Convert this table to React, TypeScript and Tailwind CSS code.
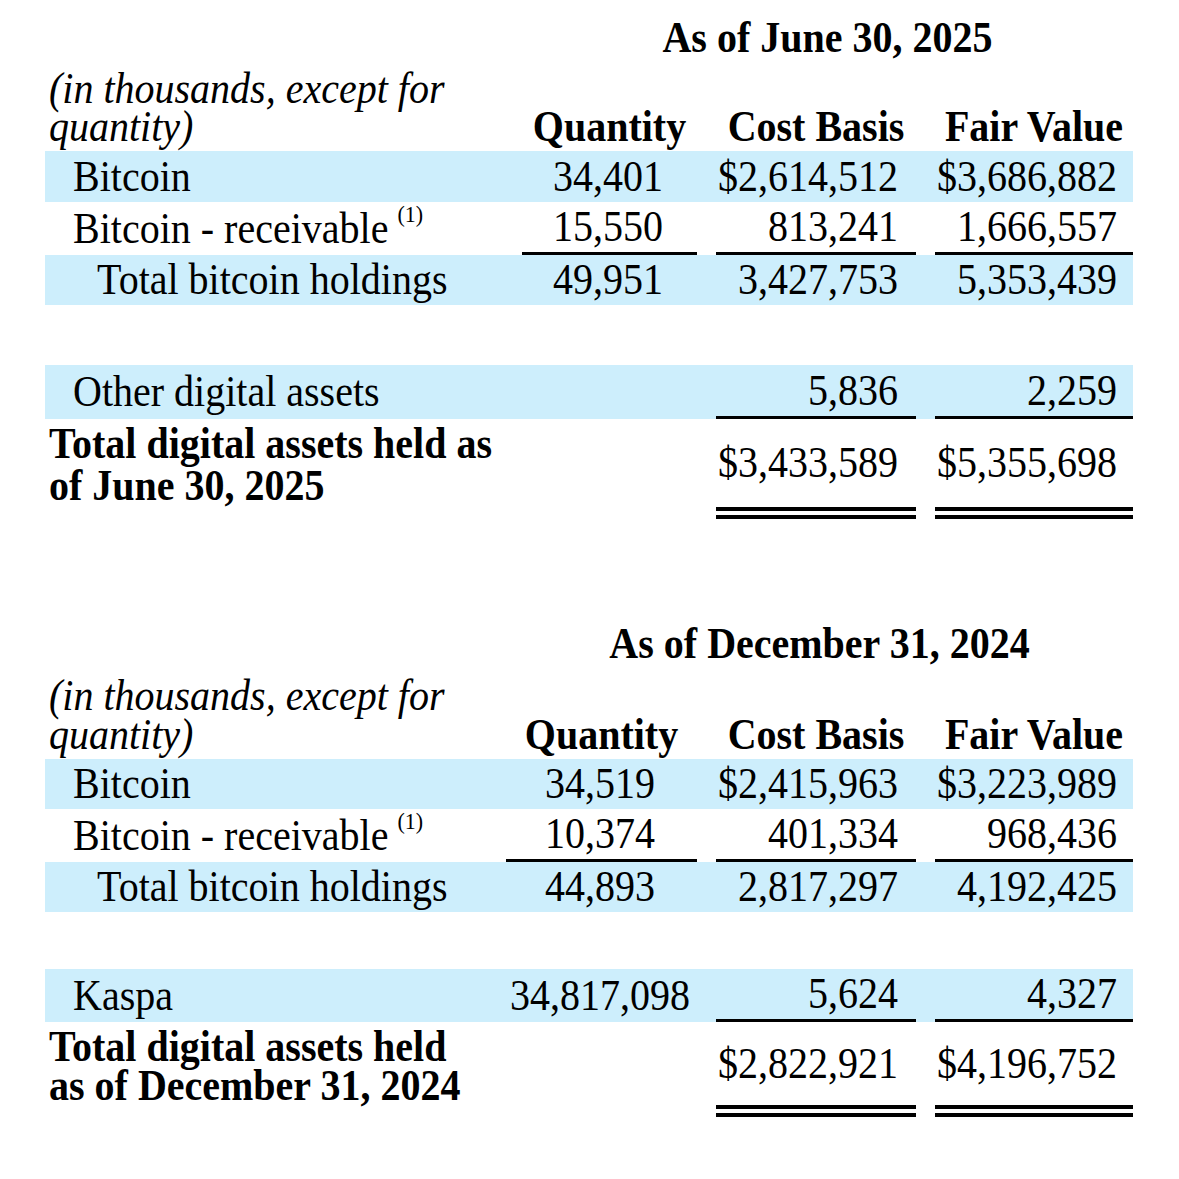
import type { ReactNode } from 'react';

const band = 'bg-[#cdeefc]';
const serif = "font-['Liberation_Serif','Times_New_Roman',serif]";

// the source text is a little taller than Liberation Serif, so stretch glyphs vertically
function T({ children, className = '' }: { children: ReactNode; className?: string }) {
  return <span className={`inline-block scale-y-[1.09] ${className}`}>{children}</span>;
}

type Line = {
  label: ReactNode;
  indent: 'one' | 'two';
  qty?: string;
  cost: string;
  fair: string;
  shaded?: boolean;
  rule?: boolean; // single rule under the figures
  ruleQty?: boolean;
  height: string;
  qtyPad?: string;
};

type TableProps = {
  cols: string;
  qtyPad: string;
  heading: string;
  headBlock: string; // leading for the italic note
  rows: Line[];
  gapAfter: string;
  extra: Line;
  totalLines: [string, string];
  totalLead: string;
  totalCost: string;
  totalFair: string;
  totalPad: string;
  totalHeight: string;
};

function Receivable() {
  return (
    <>
      Bitcoin - receivable
      <sup className="relative -top-[19px] ml-[9px] text-[22px] align-baseline">(1)</sup>
    </>
  );
}

function Row({ line, cols, qtyPad }: { line: Line; cols: string; qtyPad: string }) {
  const rule = line.rule ? 'border-b-[3px] border-black' : '';
  return (
    <div className={`grid ${cols} gap-x-[19px] ${line.shaded ? band : ''}`}>
      <div className={`flex items-center ${line.height} ${line.indent === 'two' ? 'pl-[52px]' : 'pl-[28px]'}`}>
        <T>{line.label}</T>
      </div>
      <div
        className={`flex items-center justify-end ${line.height} ${line.qtyPad ?? qtyPad} ${line.ruleQty ? rule : ''}`}
      >
        {line.qty && <T>{line.qty}</T>}
      </div>
      <div className={`flex items-center justify-end pr-[18px] ${line.height} ${rule}`}>
        <T>{line.cost}</T>
      </div>
      <div className={`flex items-center justify-end pr-[16px] ${line.height} ${rule}`}>
        <T>{line.fair}</T>
      </div>
    </div>
  );
}

function HoldingsTable(p: TableProps) {
  return (
    <div className="w-[1088px]">
      {/* heading over the three figure columns */}
      <div className={`grid ${p.cols} gap-x-[19px]`}>
        <div />
        <div className="col-span-3 text-center font-bold leading-[40px]">
          <T>{p.heading}</T>
        </div>
      </div>

      {/* note + column titles */}
      <div className={`grid ${p.cols} gap-x-[19px] items-end mt-[12px]`}>
        <div className={`pl-[4px] italic ${p.headBlock}`}>
          <T className="block">(in thousands, except for</T>
          <T className="block">quantity)</T>
        </div>
        <div className={`text-center font-bold ${p.headBlock}`}>
          <T>Quantity</T>
        </div>
        <div className={`text-center font-bold ${p.headBlock}`}>
          <T>Cost Basis</T>
        </div>
        <div className={`text-center font-bold ${p.headBlock}`}>
          <T>Fair Value</T>
        </div>
      </div>

      <div className="mt-[5px]">
        {p.rows.map((r, i) => (
          <Row key={i} line={r} cols={p.cols} qtyPad={p.qtyPad} />
        ))}
      </div>

      <div className={p.gapAfter}>
        <Row line={p.extra} cols={p.cols} qtyPad={p.qtyPad} />
      </div>

      {/* grand total with double rule */}
      <div className={`grid ${p.cols} gap-x-[19px] items-start`}>
        <div className={`pl-[4px] font-bold ${p.totalLead} ${p.totalPad}`}>
          <T className="block">{p.totalLines[0]}</T>
          <T className="block">{p.totalLines[1]}</T>
        </div>
        <div />
        <div
          className={`flex items-center justify-end pr-[18px] ${p.totalHeight} border-b-[12px] border-double border-black`}
        >
          <T>{p.totalCost}</T>
        </div>
        <div
          className={`flex items-center justify-end pr-[16px] ${p.totalHeight} border-b-[12px] border-double border-black`}
        >
          <T>{p.totalFair}</T>
        </div>
      </div>
    </div>
  );
}

export default function App() {
  return (
    <div className={`w-[1179px] h-[1179px] bg-white text-black ${serif} text-[40px] leading-[40px] pl-[45px] pt-[18px]`}>
      <HoldingsTable
        cols="grid-cols-[458px_175px_200px_198px]"
        qtyPad="pr-[34px]"
        heading="As of June 30, 2025"
        headBlock="leading-[38px]"
        rows={[
          { label: 'Bitcoin', indent: 'one', qty: '34,401', cost: '$2,614,512', fair: '$3,686,882', shaded: true, height: 'h-[51px]' },
          {
            label: <Receivable />,
            indent: 'one',
            qty: '15,550',
            cost: '813,241',
            fair: '1,666,557',
            rule: true,
            ruleQty: true,
            height: 'h-[53px]',
          },
          { label: 'Total bitcoin holdings', indent: 'two', qty: '49,951', cost: '3,427,753', fair: '5,353,439', shaded: true, height: 'h-[50px]' },
        ]}
        gapAfter="mt-[60px]"
        extra={{ label: 'Other digital assets', indent: 'one', cost: '5,836', fair: '2,259', shaded: true, rule: true, height: 'h-[54px]' }}
        totalLines={['Total digital assets held as', 'of June 30, 2025']}
        totalLead="leading-[42px]"
        totalCost="$3,433,589"
        totalFair="$5,355,698"
        totalPad="pt-[4px]"
        totalHeight="h-[100px]"
      />

      <div className="mt-[105px]">
        <HoldingsTable
          cols="grid-cols-[442px_191px_200px_198px]"
          qtyPad="pr-[42px]"
          heading="As of December 31, 2024"
          headBlock="leading-[39px]"
          rows={[
            { label: 'Bitcoin', indent: 'one', qty: '34,519', cost: '$2,415,963', fair: '$3,223,989', shaded: true, height: 'h-[50px]' },
            {
              label: <Receivable />,
              indent: 'one',
              qty: '10,374',
              cost: '401,334',
              fair: '968,436',
              rule: true,
              ruleQty: true,
              height: 'h-[53px]',
            },
            { label: 'Total bitcoin holdings', indent: 'two', qty: '44,893', cost: '2,817,297', fair: '4,192,425', shaded: true, height: 'h-[50px]' },
          ]}
          gapAfter="mt-[57px]"
          extra={{
            label: 'Kaspa',
            indent: 'one',
            qty: '34,817,098',
            qtyPad: 'pr-[7px]',
            cost: '5,624',
            fair: '4,327',
            shaded: true,
            rule: true,
            height: 'h-[53px]',
          }}
          totalLines={['Total digital assets held', 'as of December 31, 2024']}
          totalLead="leading-[39px]"
          totalCost="$2,822,921"
          totalFair="$4,196,752"
          totalPad="pt-[5px]"
          totalHeight="h-[95px]"
        />
      </div>
    </div>
  );
}
